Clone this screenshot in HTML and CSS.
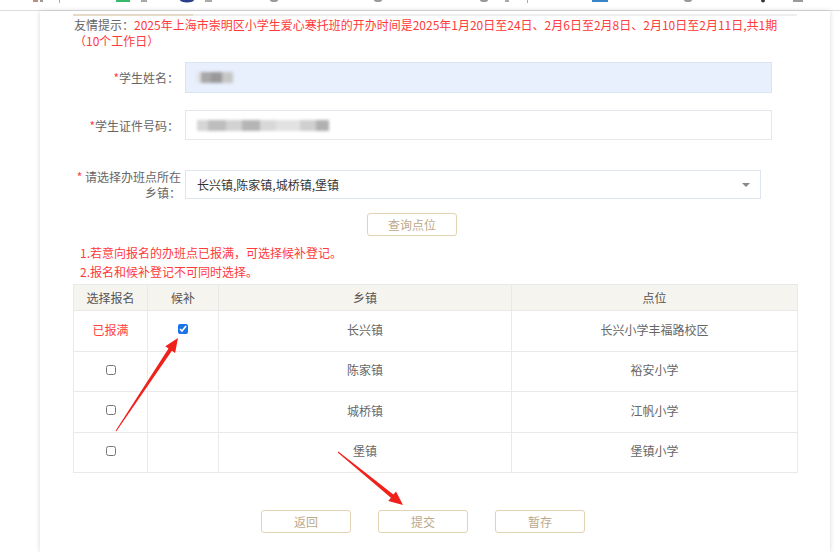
FILE: index.html
```html
<!DOCTYPE html>
<html lang="zh-CN">
<head>
<meta charset="utf-8">
<title>寒托班报名</title>
<link rel="stylesheet" href="styles.css">
</head>
<body>
<div class="toolbar">
  <svg class="toolbar-icons" width="840" height="10" viewBox="0 0 840 10">
    <rect x="33" y="0" width="5" height="2" fill="#b9907a"/>
    <rect x="40" y="0" width="3" height="2" fill="#9a9a9a"/>
    <rect x="59" y="0" width="1" height="3" fill="#aaa"/>
    <rect x="116" y="0" width="14" height="2" fill="#35b96a"/>
    <rect x="141" y="0" width="6" height="2" fill="#a8a8a8"/>
    <ellipse cx="187" cy="0" rx="7" ry="2.5" fill="#2a3f8c"/>
    <rect x="205" y="0" width="7" height="2" fill="#aaa"/>
    <ellipse cx="274" cy="0" rx="4" ry="2" fill="#9a9a9a"/>
    <ellipse cx="378" cy="0" rx="4" ry="2" fill="#9a9a9a"/>
    <ellipse cx="484" cy="0" rx="4" ry="2" fill="#9a9a9a"/>
    <rect x="505" y="0" width="4" height="2" fill="#aaa"/>
    <rect x="527" y="0" width="1" height="3" fill="#aaa"/>
    <rect x="592" y="0" width="16" height="2" fill="#3a86c8"/>
    <ellipse cx="688" cy="0" rx="4" ry="2" fill="#9a9a9a"/>
    <ellipse cx="763" cy="0" rx="2" ry="2.5" fill="#333"/>
    <rect x="793" y="0" width="10" height="2" fill="#9a9a9a"/>
  </svg>
</div>

<div class="panel">
  <div class="content">
    <div class="hint-rule"><span class="hint-rule-accent"></span></div>
    <p class="hint"><span class="hint-label">友情提示：</span><span class="hint-text">2025年上海市崇明区小学生爱心寒托班的开办时间是2025年1月20日至24日、2月6日至2月8日、2月10日至2月11日,共1期</span><br><span class="hint-text">（10个工作日）</span></p>

    <div class="form-row row-name">
      <label class="field-label"><span class="req">*</span>学生姓名：</label>
      <div class="field field-filled">
        <span class="redact redact-name"></span>
      </div>
    </div>

    <div class="form-row row-id">
      <label class="field-label"><span class="req">*</span>学生证件号码：</label>
      <div class="field">
        <span class="redact redact-id"></span>
      </div>
    </div>

    <div class="form-row row-town">
      <label class="field-label two-line"><span class="req">*</span> 请选择办班点所在<br>乡镇：</label>
      <div class="field field-select">
        <span class="select-value">长兴镇,陈家镇,城桥镇,堡镇</span>
        <span class="caret"></span>
      </div>
    </div>

    <div class="query-row">
      <button class="btn" type="button">查询点位</button>
    </div>

    <ol class="notes">
      <li>1.若意向报名的办班点已报满，可选择候补登记。</li>
      <li>2.报名和候补登记不可同时选择。</li>
    </ol>

    <table class="sites">
      <colgroup>
        <col class="c-sel"><col class="c-wait"><col class="c-town"><col class="c-site">
      </colgroup>
      <thead>
        <tr><th>选择报名</th><th>候补</th><th>乡镇</th><th>点位</th></tr>
      </thead>
      <tbody>
        <tr>
          <td class="full">已报满</td>
          <td><input type="checkbox" class="cb" checked></td>
          <td>长兴镇</td>
          <td>长兴小学丰福路校区</td>
        </tr>
        <tr>
          <td><input type="checkbox" class="cb"></td>
          <td></td>
          <td>陈家镇</td>
          <td>裕安小学</td>
        </tr>
        <tr>
          <td><input type="checkbox" class="cb"></td>
          <td></td>
          <td>城桥镇</td>
          <td>江帆小学</td>
        </tr>
        <tr>
          <td><input type="checkbox" class="cb"></td>
          <td></td>
          <td>堡镇</td>
          <td>堡镇小学</td>
        </tr>
      </tbody>
    </table>

    <div class="actions">
      <button class="btn" type="button">返回</button>
      <button class="btn" type="button">提交</button>
      <button class="btn" type="button">暂存</button>
    </div>
  </div>
</div>

<svg class="arrows" width="840" height="552" viewBox="0 0 840 552">
  <polygon fill="#f0201a" points="115.6,430.7 168.5,348.5 165.3,346.3 178,338 175.1,352.9 171.9,350.7 116.4,431.3"/>
  <polygon fill="#f0201a" points="337.7,452.4 390.9,497.7 388.3,500.9 403,505 396.0,491.4 393.4,494.6 338.3,451.6"/>
</svg>
</body>
</html>
```

FILE: styles.css
```css
* {
  box-sizing: border-box;
}

html, body {
  margin: 0;
  padding: 0;
  background: #ffffff;
}

body {
  width: 840px;
  height: 552px;
  overflow: hidden;
  position: relative;
  font-family: "Noto Sans CJK SC", "Noto Sans", "Liberation Sans", sans-serif;
  font-size: 12px;
  color: #666;
}

.toolbar {
  height: 11px;
  border-bottom: 1px solid #dcdcdc;
  overflow: hidden;
}

.toolbar-icons {
  display: block;
}

.panel {
  margin-left: 40px;
  width: 790px;
  height: 541px;
  background: #fff;
  box-shadow: 0 0 5px rgba(0, 0, 0, 0.16);
  padding-top: 3px;
}

.content {
  margin-left: 33px;
  width: 724px;
}

.hint-rule {
  height: 2px;
  background: #eeeeee;
  display: flex;
}

.hint-rule-accent {
  width: 120px;
  background: #e6dac6;
}

.hint {
  margin: 0;
  padding: 1px 0 0 1px;
  line-height: 16px;
  font-size: 12px;
}

.hint-label {
  color: #666;
}

.hint-text {
  color: #ff3a3a;
}

.form-row {
  display: flex;
  align-items: center;
  gap: 4px;
}

.row-name {
  margin-top: 13px;
  height: 31px;
}

.row-id {
  margin-top: 17px;
  height: 30px;
}

.row-town {
  margin-top: 30px;
  height: 29px;
}

.field-label {
  width: 108px;
  flex: none;
  text-align: right;
  color: #666;
  font-size: 12px;
  line-height: 15px;
  white-space: nowrap;
  padding-right: 2px;
}

.two-line {
  line-height: 16px;
  padding-right: 0;
}

.req {
  color: #ff4040;
}

.field {
  width: 587px;
  height: 100%;
  border: 1px solid #e4e7ec;
  background: #fff;
  display: flex;
  align-items: center;
  padding-left: 11px;
}

.field-filled {
  background: #e8f0fe;
  border-color: #dbe3ef;
}

.field-select {
  width: 576px;
  border-color: #dfe5ee;
  justify-content: space-between;
  padding-right: 10px;
}

.select-value {
  color: #333;
  font-size: 12px;
}

.caret {
  width: 0;
  height: 0;
  border-left: 4px solid transparent;
  border-right: 4px solid transparent;
  border-top: 4px solid #888;
}

.redact {
  display: inline-block;
  height: 11px;
  filter: blur(1.4px);
}

.redact-name {
  width: 36px;
  background: linear-gradient(90deg, #e0e0e0 0 10%, #a8a8a8 10% 40%, #999 40% 70%, #c6c6c6 70% 100%);
}

.redact-id {
  width: 132px;
  background: linear-gradient(90deg, #d6d6d6 0 8%, #bdbdbd 8% 22%, #d2d2d2 22% 34%, #b5b5b5 34% 48%, #d8d8d8 48% 60%, #e2e2e2 60% 78%, #cfcfcf 78% 90%, #b0b0b0 90% 100%);
}

.query-row {
  margin-top: 14px;
  padding-left: 294px;
  display: flex;
}

.btn {
  width: 90px;
  height: 23px;
  border: 1px solid #e3d3b5;
  border-radius: 3px;
  background: #fff;
  color: #bda98a;
  font-family: "Noto Sans CJK SC", "Noto Sans", sans-serif;
  font-size: 12px;
  padding: 0;
  line-height: 21px;
}

.notes {
  list-style: none;
  margin: 7px 0 0;
  padding-left: 7px;
  color: #ff3a3a;
  font-size: 12px;
  line-height: 19px;
}

.sites {
  margin-top: 3px;
  width: 724px;
  border-collapse: collapse;
  table-layout: fixed;
  border-top: 1px solid #dfe6ef;
  border-left: 1px solid #dfe6ef;
}

.c-sel { width: 74px; }
.c-wait { width: 71px; }
.c-town { width: 293px; }
.c-site { width: 286px; }

.sites th,
.sites td {
  border: 1px solid #e9e9e9;
  text-align: center;
  font-size: 12px;
  font-weight: normal;
  padding: 0;
}

.sites th {
  height: 26px;
  background: #f6f4ef;
  color: #555;
}

.sites td {
  height: 40.5px;
  color: #666;
  padding-bottom: 3px;
}

.sites td.full {
  color: #ff4040;
}

.cb {
  display: block;
  width: 10px;
  height: 10px;
  margin: 0 auto;
  accent-color: #1a73e8;
}

.actions {
  margin-top: 37px;
  padding-left: 188px;
  display: flex;
  gap: 27px;
}

.arrows {
  position: absolute;
  top: 0;
  left: 0;
  pointer-events: none;
}
```
